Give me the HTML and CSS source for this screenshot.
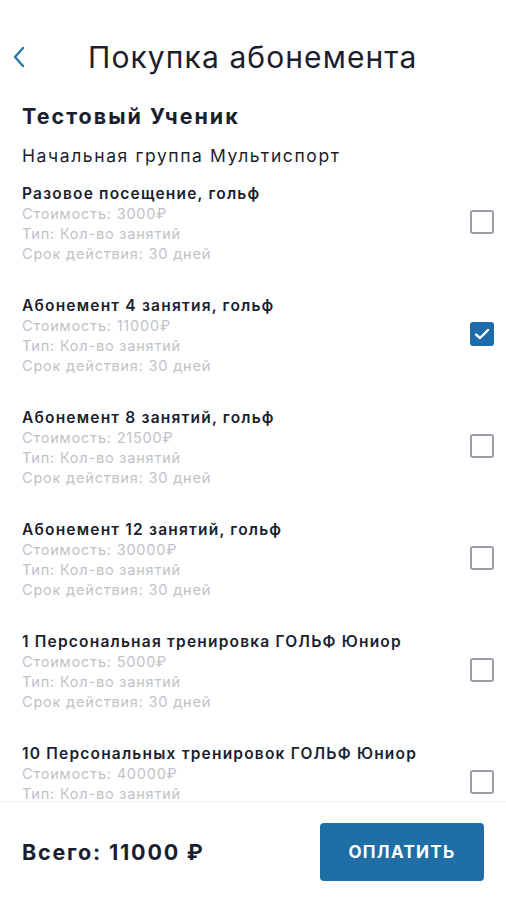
FILE: index.html
```html
<!DOCTYPE html>
<html lang="ru">
<head>
  <meta charset="UTF-8">
  <meta name="viewport" content="width=device-width, initial-scale=1.0">
  <title>Покупка абонемента</title>
  <link rel="stylesheet" href="styles.css">
</head>
<body>

  <div class="screen">
    <div class="header">
      <button class="back" type="button" aria-label="Назад">
        <svg width="14" height="22" viewBox="0 0 14 22">
          <path d="M11 2 L3 11 L11 20" fill="none" stroke="#2a78a8" stroke-width="2.4" stroke-linecap="round" stroke-linejoin="round"/>
        </svg>
      </button>
      <h1>Покупка абонемента</h1>
    </div>

    <div class="content">
      <div class="student">Тестовый Ученик</div>
      <div class="group">Начальная группа Мультиспорт</div>

      <div class="plan">
        <div class="plan-info">
          <div class="plan-title">Разовое посещение, гольф</div>
          <div class="plan-sub">Стоимость: 3000₽</div>
          <div class="plan-sub">Тип: Кол-во занятий</div>
          <div class="plan-sub">Срок действия: 30 дней</div>
        </div>
        <span class="check"></span>
      </div>

      <div class="plan">
        <div class="plan-info">
          <div class="plan-title">Абонемент 4 занятия, гольф</div>
          <div class="plan-sub">Стоимость: 11000₽</div>
          <div class="plan-sub">Тип: Кол-во занятий</div>
          <div class="plan-sub">Срок действия: 30 дней</div>
        </div>
        <span class="check checked">
          <svg width="16" height="12" viewBox="0 0 16 12">
            <path d="M2 6.5 L6 10 L14 2" fill="none" stroke="#fff" stroke-width="2.4" stroke-linecap="round" stroke-linejoin="round"/>
          </svg>
        </span>
      </div>

      <div class="plan">
        <div class="plan-info">
          <div class="plan-title">Абонемент 8 занятий, гольф</div>
          <div class="plan-sub">Стоимость: 21500₽</div>
          <div class="plan-sub">Тип: Кол-во занятий</div>
          <div class="plan-sub">Срок действия: 30 дней</div>
        </div>
        <span class="check"></span>
      </div>

      <div class="plan">
        <div class="plan-info">
          <div class="plan-title">Абонемент 12 занятий, гольф</div>
          <div class="plan-sub">Стоимость: 30000₽</div>
          <div class="plan-sub">Тип: Кол-во занятий</div>
          <div class="plan-sub">Срок действия: 30 дней</div>
        </div>
        <span class="check"></span>
      </div>

      <div class="plan">
        <div class="plan-info">
          <div class="plan-title">1 Персональная тренировка ГОЛЬФ Юниор</div>
          <div class="plan-sub">Стоимость: 5000₽</div>
          <div class="plan-sub">Тип: Кол-во занятий</div>
          <div class="plan-sub">Срок действия: 30 дней</div>
        </div>
        <span class="check"></span>
      </div>

      <div class="plan">
        <div class="plan-info">
          <div class="plan-title">10 Персональных тренировок ГОЛЬФ Юниор</div>
          <div class="plan-sub">Стоимость: 40000₽</div>
          <div class="plan-sub">Тип: Кол-во занятий</div>
        </div>
        <span class="check"></span>
      </div>
    </div>

    <div class="footer">
      <div class="total">Всего: 11000 ₽</div>
      <button class="pay" type="button">ОПЛАТИТЬ</button>
    </div>
  </div>

</body>
</html>
```

FILE: styles.css
```css
body {
  margin: 0;
  font-family: Inter, "Noto Sans", sans-serif;
  color: #1b1e2e;
  background-color: #fff;
}

.screen {
  height: 100vh;
  display: flex;
  flex-direction: column;
  overflow: hidden;
}

.header {
  display: flex;
  align-items: center;
  height: 50px;
  padding-top: 32px;
  padding-left: 12px;
}

.back {
  background: none;
  border: none;
  padding: 0;
  width: 18px;
  height: 24px;
  display: flex;
  align-items: center;
  cursor: pointer;
}

.header h1 {
  margin: 0 0 0 58px;
  font-size: 30px;
  font-weight: 400;
  letter-spacing: 1.1px;
  color: #1b1e2e;
}

.content {
  flex: 1;
  overflow: hidden;
  padding: 21px 12px 0 22px;
}

.student {
  font-size: 21.5px;
  font-weight: 700;
  letter-spacing: 2px;
  line-height: 26px;
}

.group {
  margin-top: 16px;
  font-size: 17.5px;
  letter-spacing: 1.6px;
  line-height: 22px;
}

.plan {
  display: flex;
  align-items: center;
  justify-content: space-between;
  margin-top: 17px;
  margin-bottom: 32px;
  height: 80px;
}

.plan + .plan {
  margin-top: 0;
}

.plan-info {
  align-self: flex-start;
}

.plan-title {
  font-size: 15.5px;
  font-weight: 600;
  letter-spacing: 1.2px;
  line-height: 20px;
}

.plan-sub {
  font-size: 14.5px;
  letter-spacing: 0.8px;
  line-height: 20px;
  color: #c2c2c7;
}

.check {
  width: 20px;
  height: 20px;
  border: 2px solid #9c9ca8;
  border-radius: 3px;
  display: flex;
  align-items: center;
  justify-content: center;
  margin-top: -4px;
}

.check.checked {
  width: 24px;
  height: 24px;
  border: none;
  background-color: #1b6ca8;
}

.footer {
  height: 99px;
  border-top: 1px solid #ededf0;
  display: flex;
  align-items: flex-start;
  justify-content: space-between;
  padding: 21px 22px 0 22px;
  box-sizing: border-box;
}

.total {
  font-size: 21.5px;
  font-weight: 700;
  letter-spacing: 1.8px;
  line-height: 58px;
}

.pay {
  width: 164px;
  height: 58px;
  background-color: #1f6ea6;
  color: #fff;
  border: none;
  border-radius: 4px;
  font-family: Inter, "Noto Sans", sans-serif;
  font-size: 17px;
  font-weight: 700;
  letter-spacing: 1.3px;
  cursor: pointer;
}
```
